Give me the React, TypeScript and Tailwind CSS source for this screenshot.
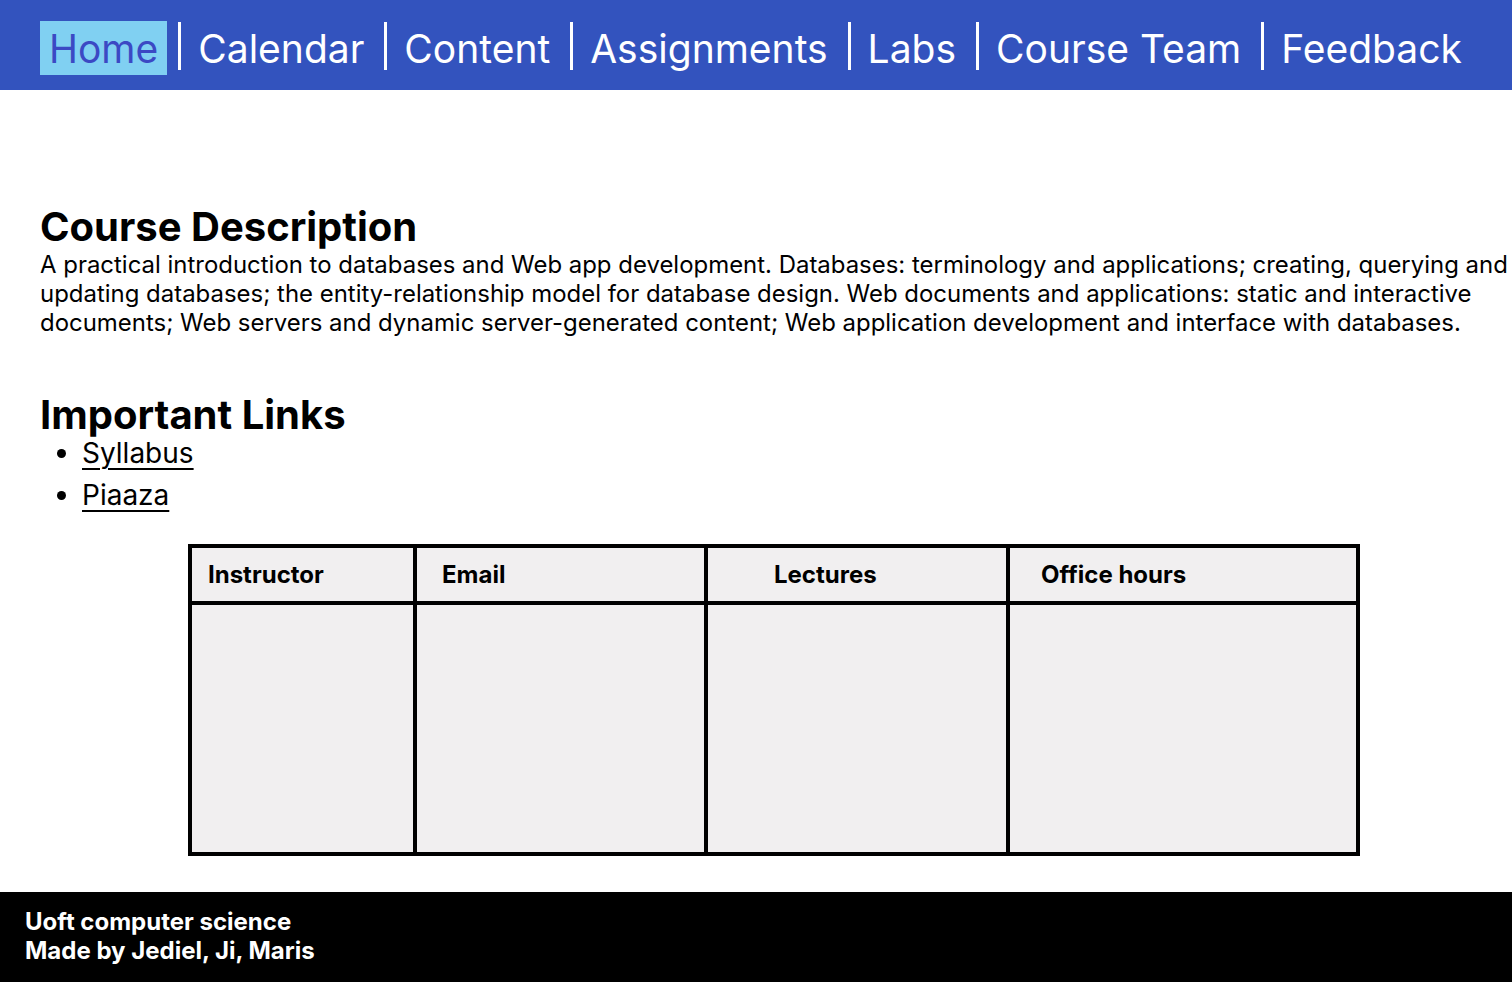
import React from "react";

const navItems = ["Calendar", "Content", "Assignments", "Labs", "Course Team", "Feedback"];

function Sep() {
  return <span className="mt-[1px] ml-[11px] mr-[8px] h-[48px] w-[3px] bg-white" />;
}

export default function App() {
  return (
    <div className="min-h-[982px] flex flex-col bg-white text-black" style={{ fontFamily: "Inter, 'Noto Sans', sans-serif" }}>
      <nav className="h-[90px] bg-[#3353be] flex items-start pt-[21px] pl-[40px]">
        <a className="px-[9px] h-[54px] flex items-center bg-[#80d0f2] text-[#3b49c4] text-[39px] leading-none">Home</a>
        {navItems.map((n) => (
          <React.Fragment key={n}>
            <Sep />
            <a className="px-[9px] h-[54px] flex items-center text-white text-[39px] leading-none">{n}</a>
          </React.Fragment>
        ))}
      </nav>

      <main className="flex-1 pl-[40px]">
        <h1 className="mt-[114px] text-[40px] font-bold leading-[46px]">Course Description</h1>
        <p className="text-[23.95px] leading-[29px]">
          A practical introduction to databases and Web app development. Databases: terminology and applications; creating, querying and updating databases; the entity-relationship model for database design. Web documents and applications: static and interactive documents; Web servers and dynamic server-generated content; Web application development and interface with databases.
        </p>
        <h2 className="mt-[55px] text-[40px] font-bold leading-[46px]">Important Links</h2>
        <ul className="-mt-[6px] list-disc pl-[42px] text-[28px] leading-[42px]">
          <li><a className="underline decoration-2 underline-offset-[5px]">Syllabus</a></li>
          <li><a className="underline decoration-2 underline-offset-[5px]">Piaaza</a></li>
        </ul>

        <div className="ml-[148px] mt-[28px] w-[1172px] border-[4px] border-black bg-[#f1eff0] grid grid-cols-[225px_291px_302px_1fr] grid-rows-[57px_247px]">
          <div className="border-r-[4px] border-b-[4px] border-black flex items-center pl-[16px] text-[24px] font-bold">Instructor</div>
          <div className="border-r-[4px] border-b-[4px] border-black flex items-center pl-[25px] text-[24px] font-bold">Email</div>
          <div className="border-r-[4px] border-b-[4px] border-black flex items-center pl-[66px] text-[24px] font-bold">Lectures</div>
          <div className="border-b-[4px] border-black flex items-center pl-[31px] text-[24px] font-bold">Office hours</div>
          <div className="border-r-[4px] border-black" />
          <div className="border-r-[4px] border-black" />
          <div className="border-r-[4px] border-black" />
          <div />
        </div>
      </main>

      <footer className="h-[90px] bg-black text-white font-bold text-[24px] leading-[29px] pl-[25px] pt-[15px]">
        <div>Uoft computer science</div>
        <div>Made by Jediel, Ji, Maris</div>
      </footer>
    </div>
  );
}
